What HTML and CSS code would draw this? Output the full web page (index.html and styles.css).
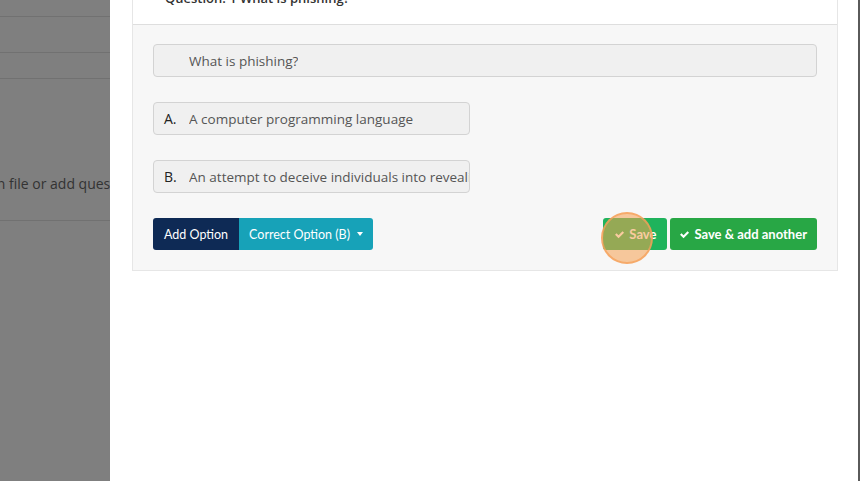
FILE: index.html
```html
<!DOCTYPE html>
<html>
<head>
<meta charset="utf-8">
<link rel="stylesheet" href="styles.css">
</head>
<body>
<div class="screen">
  <aside class="backdrop">
    <div class="row r1"></div>
    <div class="row r2"></div>
    <div class="row r3"></div>
    <div class="row r4"><span class="hint">Upload a question file or add questions manually</span></div>
  </aside>
  <main class="panel">
    <section class="card">
      <header class="card-head">Question: 1 What is phishing?</header>
      <div class="card-body">
        <div class="field question"><span class="val">What is phishing?</span></div>
        <div class="field option"><span class="lbl">A.</span><span class="val">A computer programming language</span></div>
        <div class="field option"><span class="lbl">B.</span><span class="val">An attempt to deceive individuals into revealing sensitive information</span></div>
        <div class="actions">
          <div class="group">
            <button class="btn navy">Add Option</button>
            <button class="btn teal">Correct Option (B) <span class="caret"></span></button>
          </div>
          <div class="group right">
            <button class="btn green save"><svg class="chk" viewBox="0 0 16 16"><path d="M1.5 8.4l2.2-2.2 2.9 2.9 5.8-5.9 2.2 2.2-8 8.1z" fill="currentColor"/></svg>Save</button>
            <button class="btn green2"><svg class="chk" viewBox="0 0 16 16"><path d="M1.5 8.4l2.2-2.2 2.9 2.9 5.8-5.9 2.2 2.2-8 8.1z" fill="currentColor"/></svg>Save &amp; add another</button>
            <span class="cursor"></span>
          </div>
        </div>
      </div>
    </section>
  </main>
  <div class="edge"></div>
</div>
</body>
</html>
```
FILE: styles.css
```css
html, body {
  margin: 0;
  padding: 0;
  width: 860px;
  height: 481px;
  overflow: hidden;
  font-family: "Open Sans", "Liberation Sans", sans-serif;
}
.screen {
  display: flex;
  width: 860px;
  height: 481px;
}
.backdrop {
  width: 110px;
  flex: none;
  background: #7f7f7f;
  overflow: hidden;
}
.row {
  border-bottom: 1px solid #717171;
}
.r1 { height: 16px; }
.r2 { height: 35px; }
.r3 { height: 25px; }
.r4 {
  height: 141px;
  display: flex;
  align-items: flex-start;
  white-space: nowrap;
}
.hint {
  margin-top: 95px;
  margin-left: -114px;
  font-size: 14px;
  color: #333;
}
.panel {
  flex: 1;
  background: #fff;
  padding: 0 20px 0 22px;
  overflow: hidden;
}
.edge {
  width: 2px;
  flex: none;
  background: #5a5a5a;
}
.card {
  margin-top: -20px;
  border: 1px solid #e6e6e6;
  border-top: none;
}
.card-head {
  height: 44px;
  padding: 0 32px;
  font-size: 13px;
  font-weight: 600;
  color: #333;
  line-height: 36px;
  border-bottom: 1px solid #dedede;
  background: #fff;
}
.card-body {
  background: #f7f7f7;
  padding: 19px 20px 20px 20px;
}
.field {
  display: flex;
  align-items: center;
  height: 31px;
  border: 1px solid #d3d3d3;
  border-radius: 4px;
  background: #f0f0f0;
  font-size: 13.5px;
  color: #555;
  white-space: nowrap;
  overflow: hidden;
}
.question {
  padding-left: 35px;
}
.option {
  box-sizing: border-box;
  height: 33px;
  width: 317px;
  margin-top: 25px;
  padding-left: 10px;
}
.lbl {
  width: 25px;
  flex: none;
  color: #222;
  font-size: 14px;
}
.val {
  overflow: hidden;
}
.actions {
  display: flex;
  justify-content: space-between;
  margin-top: 25px;
}
.group {
  display: flex;
  gap: 0;
}
.group.right {
  gap: 3px;
  position: relative;
}
.btn {
  height: 32px;
  border: none;
  color: #fff;
  font-size: 12.5px;
  font-family: "Lato", sans-serif;
  padding: 0 11px;
  display: flex;
  align-items: center;
  gap: 4px;
  cursor: pointer;
}
.navy {
  background: #0e2a55;
  border-radius: 3px 0 0 3px;
}
.teal {
  background: #17a2b8;
  border-radius: 0 3px 3px 0;
  padding: 0 10px;
}
.caret {
  display: inline-block;
  margin-left: 3px;
  border-top: 4px solid #fff;
  border-left: 3.5px solid transparent;
  border-right: 3.5px solid transparent;
}
.green {
  background: #1fb35c;
  border-radius: 3px;
  font-weight: 700;
  font-size: 13px;
  padding: 0 11px;
}
.green2 {
  background: #28a745;
  border-radius: 3px;
  font-weight: 700;
  font-size: 13px;
  padding: 0 10px 0 9px;
}
.chk {
  width: 11px;
  height: 11px;
}
.cursor {
  position: absolute;
  left: -2px;
  top: -6px;
  width: 52px;
  height: 52px;
  border-radius: 50%;
  background: rgba(245, 160, 80, 0.55);
  border: 2px solid rgba(245, 160, 90, 0.75);
  box-sizing: border-box;
  pointer-events: none;
}
```
